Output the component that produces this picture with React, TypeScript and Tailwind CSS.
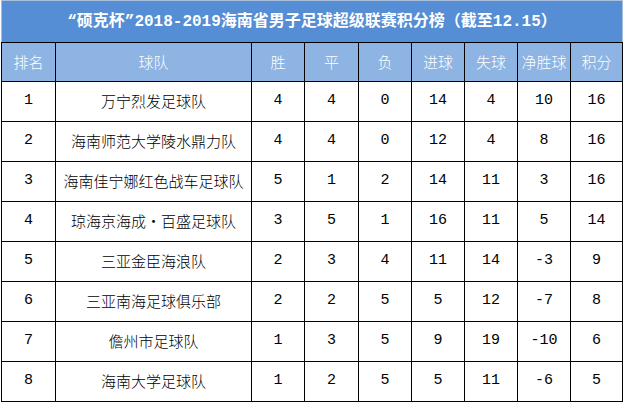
const rows: (string | number)[][] = [
  [1, "万宁烈发足球队", 4, 4, 0, 14, 4, 10, 16],
  [2, "海南师范大学陵水鼎力队", 4, 4, 0, 12, 4, 8, 16],
  [3, "海南佳宁娜红色战车足球队", 5, 1, 2, 14, 11, 3, 16],
  [4, "琼海京海成·百盛足球队", 3, 5, 1, 16, 11, 5, 14],
  [5, "三亚金臣海浪队", 2, 3, 4, 11, 14, -3, 9],
  [6, "三亚南海足球俱乐部", 2, 2, 5, 5, 12, -7, 8],
  [7, "儋州市足球队", 1, 3, 5, 9, 19, -10, 6],
  [8, "海南大学足球队", 1, 2, 5, 5, 11, -6, 5],
];

const headers = ["排名", "球队", "胜", "平", "负", "进球", "失球", "净胜球", "积分"];
const widths = [54, 196, 53, 54, 53, 53, 53, 53, 52];

export default function App() {
  return (
    <div className="w-[623px] h-[403px] bg-white overflow-hidden">
      <table className="table-fixed border-collapse w-[622px] ml-px">
        <colgroup>
          {widths.map((w, i) => (
            <col key={i} style={{ width: w }} />
          ))}
        </colgroup>
        <thead>
          <tr className="h-[42px]">
            <th
              colSpan={9}
              className="bg-[#558ed5] border border-[#a9bfdc] border-b-black text-white text-[16px] font-bold font-['Liberation_Mono','Noto_Sans_CJK_SC',monospace]"
            >
              “硕克杯”2018-2019海南省男子足球超级联赛积分榜（截至12.15）
            </th>
          </tr>
          <tr className="h-[39px]">
            {headers.map((h) => (
              <th
                key={h}
                className="bg-[#8db4e2] border border-black text-white text-[15px] font-light font-['Noto_Sans_CJK_SC',sans-serif]"
              >
                {h}
              </th>
            ))}
          </tr>
        </thead>
        <tbody>
          {rows.map((r) => (
            <tr key={r[0]} className="h-[40px]">
              {r.map((c, i) => (
                <td
                  key={i}
                  className={
                    "border border-black text-center text-black " +
                    (i === 1
                      ? "font-['Noto_Sans_CJK_SC',sans-serif] font-light text-[15px]"
                      : "font-['Liberation_Mono',monospace] text-[15px]")
                  }
                >
                  {c}
                </td>
              ))}
            </tr>
          ))}
        </tbody>
      </table>
    </div>
  );
}
